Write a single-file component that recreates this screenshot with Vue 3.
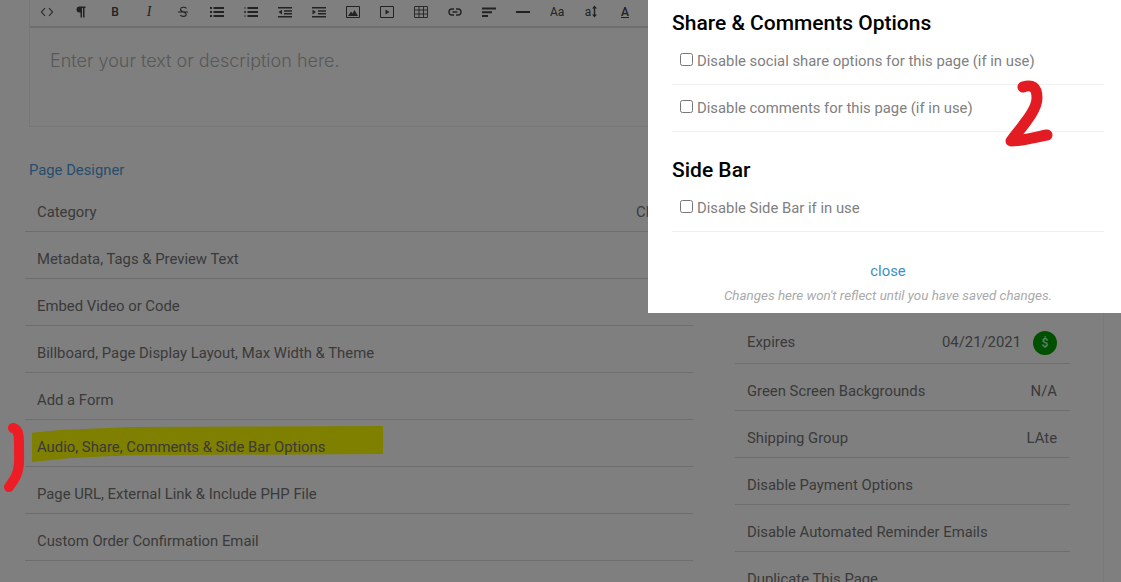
<script setup>
const leftRows = [
  { label: 'Category', value: 'Click' },
  { label: 'Metadata, Tags & Preview Text' },
  { label: 'Embed Video or Code' },
  { label: 'Billboard, Page Display Layout, Max Width & Theme' },
  { label: 'Add a Form' },
  { label: 'Audio, Share, Comments & Side Bar Options', highlight: true },
  { label: 'Page URL, External Link & Include PHP File' },
  { label: 'Custom Order Confirmation Email' }
]
const rightRows = [
  { label: 'Expires', value: '04/21/2021', badge: true },
  { label: 'Green Screen Backgrounds', value: 'N/A' },
  { label: 'Shipping Group', value: 'LAte' },
  { label: 'Disable Payment Options' },
  { label: 'Disable Automated Reminder Emails' },
  { label: 'Duplicate This Page' }
]
</script>

<template>
  <div class="page">
    <div class="main">
      <div class="editor">
        <div class="toolbar">
          <svg class="tb" viewBox="0 0 14 14"><path d="M5 3 1.500 7 5 11M9 3l3.500 4L9 11" fill="none" stroke="#444" stroke-width="1.100"/></svg>
          <svg class="tb" viewBox="0 0 14 14"><path d="M5.500 1.500h6v1.500h-1v9.500H9V3H8v9.500H6.500V7.500h-1a3 3 0 0 1 0-6z" fill="#444"/></svg>
          <span class="tb glyph bold">B</span>
          <span class="tb glyph ital">I</span>
          <svg class="tb" viewBox="0 0 14 14"><path d="M10.500 3.500C9.500 1.800 5 1.800 4.500 4c-.3 1.500 1.500 2.500 3 3 1.700.6 3 1.300 2.600 3-.5 1.800-4.500 1.800-5.800.2M2 7h10" fill="none" stroke="#444" stroke-width="1.100"/></svg>
          <svg class="tb" viewBox="0 0 14 14"><path d="M0 2h2v2H0zM0 6h2v2H0zM0 10h2v2H0zM3.500 2H14v2H3.500zM3.500 6H14v2H3.500zM3.500 10H14v2H3.500z" fill="#444"/></svg>
          <svg class="tb" viewBox="0 0 14 14"><path d="M.5 2h1v2h-1zM0 6h2v2H0zM.5 10h1v2h-1z" fill="#777"/><path d="M3.500 2H14v2H3.500zM3.500 6H14v2H3.500zM3.500 10H14v2H3.500z" fill="#444"/></svg>
          <svg class="tb" viewBox="0 0 14 14"><path d="M0 2h14v1.500H0zM6 5.200h8v1.500H6zM6 8h8v1.500H6zM0 11h14v1.500H0zM4 4.800v4.600L.5 7z" fill="#444"/></svg>
          <svg class="tb" viewBox="0 0 14 14"><path d="M0 2h14v1.500H0zM6 5.200h8v1.500H6zM6 8h8v1.500H6zM0 11h14v1.500H0zM.5 4.800v4.600L4 7z" fill="#444"/></svg>
          <svg class="tb" viewBox="0 0 14 14"><path d="M.5 1.500h13v11H.5z" fill="none" stroke="#444"/><path d="M2 11l3-4.500 1.500 2L8.500 5l3.500 6z" fill="#444"/></svg>
          <svg class="tb" viewBox="0 0 14 14"><path d="M.5 1.500h13v11H.5z" fill="none" stroke="#444"/><path d="M5.500 4.500v5L9.500 7z" fill="#444"/></svg>
          <svg class="tb" viewBox="0 0 14 14"><path d="M.5 1.500h13v11H.5zM.5 5h13M.5 9h13M5 1.500v11M9.500 1.500v11" fill="none" stroke="#444" stroke-width=".9"/></svg>
          <svg class="tb" viewBox="0 0 14 14"><path d="M6 4H4a3 3 0 0 0 0 6h2M8 4h2a3 3 0 0 1 0 6H8M4.500 7h5" fill="none" stroke="#444" stroke-width="1.400"/></svg>
          <svg class="tb" viewBox="0 0 14 14"><path d="M0 2.500h14v2H0zM0 6.200h10v2H0zM0 10h6v2H0z" fill="#444"/></svg>
          <svg class="tb" viewBox="0 0 14 14"><path d="M0 6h14v2H0z" fill="#444"/></svg>
          <span class="tb glyph aa">Aa</span>
          <span class="tb glyph size">a<svg class="arrows" viewBox="0 0 5 12"><path d="M2.500 0 5 3H3.200v6H5l-2.500 3L0 9h1.800V3H0z" fill="#444"/></svg></span>
          <span class="tb glyph under">A</span>
        </div>
        <div class="editor-body">Enter your text or description here.</div>
      </div>

      <div class="columns">
        <div class="left">
          <a class="designer">Page Designer</a>
          <ul class="list">
            <li v-for="row in leftRows" :key="row.label" class="row">
              <span v-if="row.highlight" class="marker"></span>
              <span class="label">{{ row.label }}</span>
              <span v-if="row.value" class="value">{{ row.value }}</span>
            </li>
          </ul>
        </div>
        <ul class="list right">
          <li v-for="row in rightRows" :key="row.label" class="row">
            <span class="label">{{ row.label }}</span>
            <span v-if="row.value" class="value">{{ row.value }}</span>
            <span v-if="row.badge" class="badge">$</span>
          </li>
        </ul>
      </div>
    </div>

    <div class="backdrop"></div>

    <section class="dialog">
      <h2>Share &amp; Comments Options</h2>
      <label class="opt"><input type="checkbox" />Disable social share options for this page (if in use)</label>
      <label class="opt"><input type="checkbox" />Disable comments for this page (if in use)</label>
      <h2 class="second">Side Bar</h2>
      <label class="opt"><input type="checkbox" />Disable Side Bar if in use</label>
      <a class="close">close</a>
      <p class="note">Changes here won't reflect until you have saved changes.</p>
    </section>

    <svg class="scribble one" viewBox="0 0 30 75"><path d="M13 8C18 9 19 14 19 24 19 40 20 47 16 56 14 60 11 64 9 67" fill="none" stroke="#ee1c25" stroke-width="10" stroke-linecap="round"/></svg>
    <svg class="scribble two" viewBox="0 0 60 80"><path d="M23 9C32 6 37 9 37 20 37 32 24 46 11 63 22 63 36 59 47 57" fill="none" stroke="#e31b23" stroke-width="11" stroke-linecap="round" stroke-linejoin="round"/></svg>
  </div>
</template>

<style>
html, body { margin: 0; background: #fff; }
</style>

<style scoped>
.page {
  position: relative;
  width: 1121px;
  height: 582px;
  overflow: hidden;
  background: #fff;
  font-family: Roboto, "Liberation Sans", sans-serif;
  font-size: 14.850px;
  color: #757575;
  box-sizing: border-box;
}
.main {
  width: 1104px;
  height: 582px;
  box-sizing: border-box;
  padding-left: 25px;
  border-right: 1px solid #f3f3f3;
}
.editor {
  width: 700px;
  margin-left: 4px;
  height: 127px;
  box-sizing: border-box;
  border: 1px solid #eee;
  border-top: 0;
}
.toolbar {
  height: 28px;
  box-sizing: border-box;
  border-bottom: 2px solid #ddd;
  display: flex;
  align-items: center;
  padding: 0 0 3px 10px;
  gap: 20px;
}
.tb {
  width: 14px;
  height: 14px;
  flex: none;
  display: block;
}
.glyph {
  font-size: 12px;
  line-height: 14px;
  color: #444;
  text-align: center;
}
.bold { font-weight: 500; }
.ital { font-family: "Liberation Serif", serif; font-style: italic; font-size: 14px; }
.size { display: flex; justify-content: center; align-items: center; gap: 1px; }
.arrows { width: 5px; height: 13px; }
.under { text-decoration: underline; font-weight: 500; }
.editor-body {
  padding: 21px 20px;
  font-family: Inter, sans-serif;
  font-weight: 300;
  font-size: 18px;
  line-height: 24px;
  color: #b0b0b0;
}
.columns {
  display: flex;
  align-items: flex-start;
  gap: 42px;
}
.left { width: 668px; flex: none; }
.designer {
  display: block;
  margin: 32px 0 0 4px;
  height: 22px;
  line-height: 22px;
  color: #4f9bd9;
  font-size: 14.800px;
}
.list { list-style: none; margin: 0; padding: 0; }
.left .list { margin-top: 4px; }
.right { width: 335px; flex: none; margin-top: 190px; }
.row {
  position: relative;
  height: 47px;
  box-sizing: border-box;
  border-bottom: 1px solid #ddd;
  padding: 8px 12px 0;
  display: flex;
  align-items: center;
  gap: 12px;
}
.right .row:first-child { padding-top: 4px; }
.label { position: relative; flex: 1; }
.value { position: relative; }
.left .value { flex: 0 0 45px; }
.marker {
  position: absolute;
  left: 7px;
  top: 6px;
  width: 351px;
  height: 36px;
  background: #ffff00;
  clip-path: polygon(0 19%, 8% 11%, 28% 3%, 100% 0, 100% 78%, 28% 81%, 11% 89%, 0 100%);
}
.badge {
  width: 24px;
  height: 24px;
  margin-top: 2px;
  border-radius: 50%;
  background: #00a000;
  color: #cfc;
  font-size: 12px;
  font-weight: 500;
  display: flex;
  align-items: center;
  justify-content: center;
}
.right .row { padding-right: 13px; }
.backdrop {
  position: absolute;
  inset: 0;
  background: rgba(0, 0, 0, 0.5);
}
.dialog {
  position: absolute;
  left: 648px;
  top: 0;
  width: 473px;
  height: 313px;
  box-sizing: border-box;
  background: #fff;
  padding: 9px 17px 0 24px;
}
h2 {
  margin: 0 0 1px;
  color: #000;
  font-size: 21px;
  font-weight: 500;
  line-height: 28px;
}
h2.second { margin-top: 24px; }
.opt {
  display: flex;
  align-items: center;
  height: 47px;
  box-sizing: border-box;
  border-bottom: 1px solid #f0f0f0;
  padding-left: 8px;
  color: #808080;
}
.opt input {
  width: 13px;
  height: 13px;
  margin: 0 4px 4px 0;
}
.close {
  display: block;
  margin-top: 29px;
  text-align: center;
  color: #3d8fc4;
  line-height: 20px;
}
.note {
  margin: 7px 0 0;
  text-align: center;
  font-style: italic;
  font-size: 13.400px;
  line-height: 16px;
  color: #aaa;
}
.scribble { position: absolute; }
.scribble.one { left: 0; top: 420px; width: 30px; height: 75px; }
.scribble.two { left: 1000px; top: 78px; width: 60px; height: 80px; }
</style>
